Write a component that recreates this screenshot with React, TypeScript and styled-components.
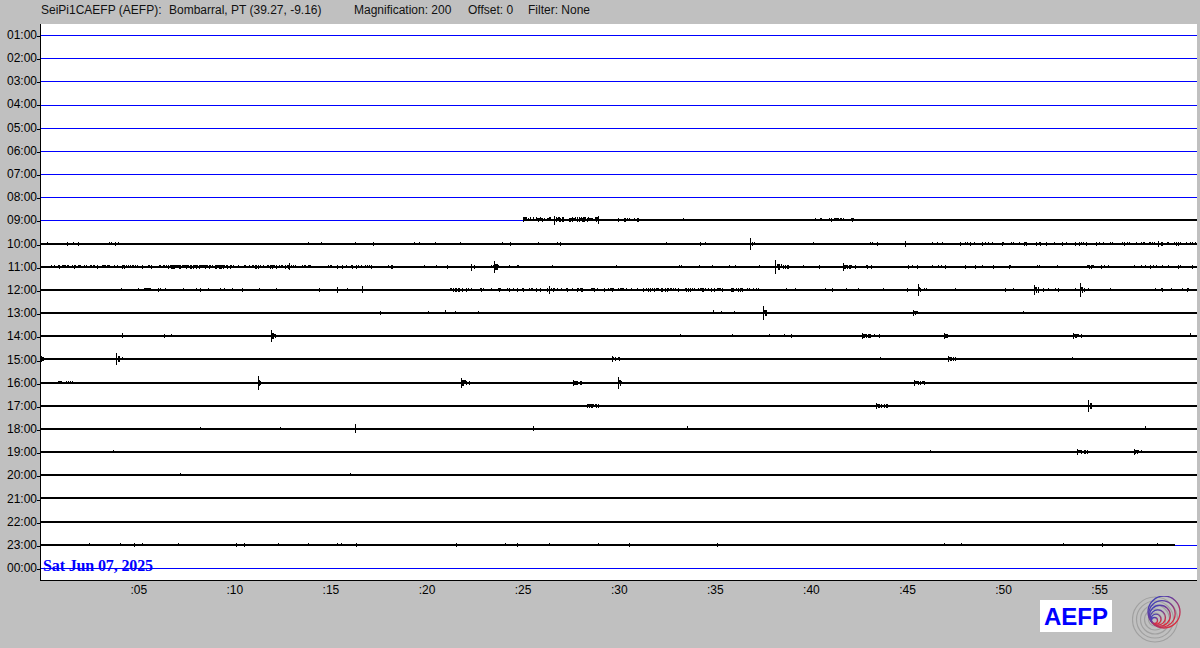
import { FC } from 'react';
import styled, { createGlobalStyle } from 'styled-components';

const rowHeight = 23.17;
const plotWidth = 1156;
const plotHeight = 556;

const GlobalStyle = createGlobalStyle`
  html, body {
    margin: 0;
    padding: 0;
    background: #c0c0c0;
    overflow: hidden;
  }
`;

const Page = styled.div`
  width: 1200px;
  height: 648px;
  display: flex;
  flex-direction: column;
  background: #c0c0c0;
  color: #000;
  font-family: 'Liberation Sans', Arial, sans-serif;
  font-size: 12px;
`;

const TopBar = styled.div`
  height: 24px;
  padding: 2px 0 0 41px;
  box-sizing: border-box;
  display: flex;
  align-items: flex-start;
  line-height: 16px;
  color: #111;
`;

const TopField = styled.span<{ $width: number }>`
  width: ${(p) => p.$width}px;
  white-space: nowrap;
`;

const Middle = styled.div`
  display: flex;
  height: ${plotHeight + 1}px;
`;

const HourColumn = styled.div`
  width: 40px;
  margin-top: -0.7px;
  display: flex;
  flex-direction: column;
`;

const HourLabel = styled.div`
  height: 23.2px;
  flex: none;
  display: flex;
  align-items: center;
  justify-content: flex-end;
  line-height: 12px;
  &::after {
    content: '';
    width: 3px;
    height: 1px;
    background: #000;
    margin-top: 3px;
  }
`;

const Plot = styled.div`
  position: relative;
  width: ${plotWidth}px;
  height: ${plotHeight}px;
  background: #fff;
  border-left: 1px solid #000;
  border-bottom: 1px solid #000;
`;

const TraceSvg = styled.svg`
  display: block;
  shape-rendering: crispEdges;
`;

const DateStamp = styled.div`
  position: absolute;
  left: 2px;
  top: 534px;
  font-family: 'Liberation Serif', 'Times New Roman', serif;
  font-weight: bold;
  font-size: 16px;
  letter-spacing: -0.13px;
  line-height: 16px;
  color: #0000ff;
  white-space: nowrap;
`;

const MinuteAxis = styled.div`
  display: flex;
  padding-left: 51px;
  height: 18px;
  line-height: 18px;
`;

const MinuteLabel = styled.div`
  width: 96.1px;
  flex: none;
  text-align: right;
`;

const Footer = styled.div`
  flex: 1;
  display: flex;
  justify-content: flex-end;
  align-items: flex-start;
  padding: 1px 18px 0 0;
`;

const AefpBadge = styled.div`
  width: 72px;
  height: 32px;
  background: #fff;
  color: #0000ff;
  font-weight: bold;
  font-size: 24px;
  line-height: 33px;
  text-align: center;
  margin-right: 20px;
`;

const SeismoLogo = styled.svg`
  display: block;
  margin-top: -4px;
`;

/* small deterministic generator so the trace is the same on every load */
let seed = 7;
const rnd = () => {
  seed = (seed * 16807) % 2147483647;
  return seed / 2147483647;
};

type Spike = [number, number, number];
type Range = [number, number, number, number];
type Burst = [number, number, number];

type Trace = {
  spikes?: Spike[]; // x, up, down
  ranges?: Range[]; // from, to, density, amp
  bursts?: Burst[]; // x, amp, length
};

const traces: Record<number, Trace> = {
  8: {
    ranges: [
      [523, 568, 0.6, 2],
      [568, 598, 0.9, 2],
      [616, 640, 0.4, 1],
      [650, 700, 0.03, 1],
      [803, 855, 0.35, 1],
    ],
    spikes: [[554, 3, 4], [598, 3, 3]],
  },
  9: {
    ranges: [
      [45, 140, 0.06, 1],
      [140, 750, 0.02, 1],
      [760, 960, 0.03, 1],
      [960, 1140, 0.2, 1],
      [1140, 1196, 0.45, 1],
    ],
    spikes: [[750, 5, 5], [752, 1, 1], [754, 1, 0], [905, 2, 2], [1158, 2, 2]],
  },
  10: {
    ranges: [
      [50, 170, 0.45, 1],
      [170, 225, 0.85, 1],
      [225, 300, 0.45, 1],
      [300, 400, 0.25, 1],
      [420, 530, 0.1, 1],
      [530, 770, 0.03, 1],
      [800, 1000, 0.06, 1],
      [1000, 1196, 0.1, 1],
    ],
    spikes: [[289, 3, 2], [471, 2, 3]],
    bursts: [[494, 5, 8], [775, 6, 14], [843, 3, 10]],
  },
  11: {
    ranges: [
      [100, 240, 0.08, 1],
      [144, 154, 0.8, 1],
      [240, 440, 0.04, 1],
      [450, 620, 0.35, 1],
      [620, 760, 0.45, 1],
      [760, 1000, 0.05, 1],
      [1000, 1196, 0.06, 1],
    ],
    spikes: [[337, 2, 2], [362, 3, 2], [549, 3, 3]],
    bursts: [[918, 5, 3], [1034, 4, 10], [1080, 6, 6]],
  },
  12: {
    ranges: [
      [380, 500, 0.04, 1],
      [700, 760, 0.03, 1],
    ],
    spikes: [[445, 2, 0], [713, 2, 0], [1023, 1, 0]],
    bursts: [[763, 6, 8], [913, 2, 5]],
  },
  13: {
    ranges: [
      [120, 600, 0.012, 1],
      [600, 860, 0.012, 1],
    ],
    spikes: [[122, 2, 1], [1190, 2, 0]],
    bursts: [[271, 5, 5], [862, 2, 18], [944, 2, 7], [1073, 2, 12]],
  },
  14: {
    spikes: [[880, 1, 0], [1072, 1, 0]],
    bursts: [[41, 2, 4], [116, 5, 8], [612, 2, 9], [948, 2, 12]],
  },
  15: {
    ranges: [[58, 76, 0.4, 1]],
    bursts: [[258, 6, 4], [461, 4, 9], [573, 2, 9], [618, 5, 6], [914, 2, 11]],
  },
  16: {
    bursts: [[587, 1, 12], [876, 2, 12], [1088, 5, 8]],
  },
  17: {
    spikes: [[200, 1, 0], [280, 1, 0], [355, 4, 3], [533, 2, 1], [687, 2, 0], [1145, 2, 0]],
  },
  18: {
    spikes: [[113, 1, 0], [930, 1, 0]],
    bursts: [[1077, 2, 11], [1134, 2, 11]],
  },
  19: {
    spikes: [[180, 1, 0], [350, 1, 0]],
  },
  22: {
    ranges: [[45, 1175, 0.02, 1]],
  },
};

const lineY = (i: number) => Math.round(11 + rowHeight * i);
const toPlot = (x: number) => x - 41;

const spikePath = (x: number, y: number, up: number, down: number) =>
  `M${toPlot(x) + 0.5} ${y - 1 - up}V${y + 1 + down}`;

const buildTrace = (i: number, trace: Trace) => {
  const y = lineY(i);
  let d = '';
  (trace.ranges || []).forEach(([from, to, density, amp]) => {
    for (let x = from; x < to; x += 1) {
      if (rnd() < density) {
        d += spikePath(x, y, Math.ceil(rnd() * amp), rnd() < 0.3 ? 1 : 0);
      }
    }
  });
  (trace.spikes || []).forEach(([x, up, down]) => {
    d += spikePath(x, y, up, down);
  });
  (trace.bursts || []).forEach(([x, amp, len]) => {
    d += spikePath(x, y, amp, amp);
    // short thick block after the onset, then a patchy tail
    for (let k = 1; k < len; k += 1) {
      const head = k < len * 0.45;
      if (head ? rnd() < 0.85 : rnd() < 0.45) {
        const a = head ? Math.max(1, Math.round(amp * 0.4)) : 1;
        d += spikePath(x + k, y, a, rnd() < 0.6 ? a : 0);
      }
    }
  });
  return d;
};

// where a hour row turns from the idle blue line to the thick black one
const blackSpan = (i: number): [number, number] | null => {
  if (i === 8) return [523, 1197];
  if (i > 8 && i < 22) return [41, 1197];
  if (i === 22) return [41, 1175];
  return null;
};

const hours = Array.from({ length: 24 }, (_, i) => `${String((i + 1) % 24).padStart(2, '0')}:00`);
const minutes = Array.from({ length: 11 }, (_, i) => `:${String((i + 1) * 5).padStart(2, '0')}`);

const Helicorder: FC = () => (
  <TraceSvg width={plotWidth} height={plotHeight} viewBox={`0 0 ${plotWidth} ${plotHeight}`}>
    {hours.map((h, i) => {
      const span = blackSpan(i);
      const y = lineY(i);
      return (
        <g key={h}>
          <rect x={0} y={y} width={plotWidth} height={1} fill="#0000ff" />
          {span && (
            <rect x={toPlot(span[0])} y={y - 1} width={span[1] - span[0]} height={2} fill="#000" />
          )}
          {traces[i] && <path d={buildTrace(i, traces[i])} stroke="#000" strokeWidth={1} fill="none" />}
        </g>
      );
    })}
  </TraceSvg>
);

const ringRadii = [16, 13.2, 10.4, 7.6, 5, 3];

const Logo: FC = () => {
  // gradient rings all sit towards the small ring near the middle of the grey target
  const tx = 32;
  const ty = 16;
  return (
    <SeismoLogo width={50} height={48} viewBox="0 0 50 48">
      <defs>
        <linearGradient id="logoGrad" x1="0.1" y1="0" x2="0.85" y2="0.9">
          <stop offset="0" stopColor="#3440c0" />
          <stop offset="0.5" stopColor="#7a3a8e" />
          <stop offset="1" stopColor="#e02a38" />
        </linearGradient>
      </defs>
      <g fill="none" stroke="#a0a0a0" strokeWidth={1.2}>
        {[22.5, 18.5, 14.5, 10.5, 6.5].map((r) => (
          <circle key={r} cx={23} cy={23.5} r={r} />
        ))}
      </g>
      <g fill="none" stroke="url(#logoGrad)" strokeWidth={1.3}>
        {ringRadii.map((r) => {
          const t = (r - 3) / 13;
          return <circle key={r} cx={22.5 + (tx - 22.5) * t} cy={24.5 + (ty - 24.5) * t} r={r} />;
        })}
      </g>
    </SeismoLogo>
  );
};

const App: FC = () => (
  <Page>
    <GlobalStyle />
    <TopBar>
      <TopField $width={128}>SeiPi1CAEFP (AEFP):</TopField>
      <TopField $width={185}>Bombarral, PT (39.27, -9.16)</TopField>
      <TopField $width={114}>Magnification: 200</TopField>
      <TopField $width={60}>Offset: 0</TopField>
      <TopField $width={80}>Filter: None</TopField>
    </TopBar>
    <Middle>
      <HourColumn>
        {hours.map((h) => (
          <HourLabel key={h}>{h}</HourLabel>
        ))}
      </HourColumn>
      <Plot>
        <Helicorder />
        <DateStamp>Sat Jun 07, 2025</DateStamp>
      </Plot>
    </Middle>
    <MinuteAxis>
      {minutes.map((m) => (
        <MinuteLabel key={m}>{m}</MinuteLabel>
      ))}
    </MinuteAxis>
    <Footer>
      <AefpBadge>AEFP</AefpBadge>
      <Logo />
    </Footer>
  </Page>
);

export default App;
